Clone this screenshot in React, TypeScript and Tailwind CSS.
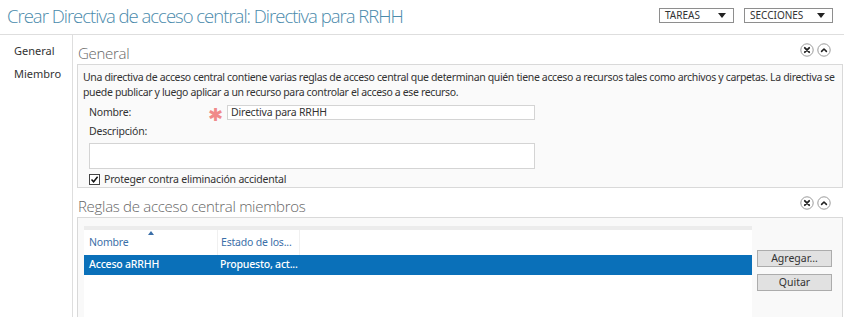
import React from 'react';

const CircleIcon = ({ kind }: { kind: 'x' | 'up' }) => (
  <svg width="14" height="14" viewBox="0 0 14 14" className="block">
    <circle cx="7" cy="7" r="6.2" fill="#fff" stroke="#9a9a9a" strokeWidth="1" />
    {kind === 'x' ? (
      <path d="M4.8 4.8 L9.2 9.2 M9.2 4.8 L4.8 9.2" stroke="#222" strokeWidth="1.8" strokeLinecap="round" />
    ) : (
      <path d="M4.6 8.4 L7 6 L9.4 8.4" stroke="#222" strokeWidth="1.6" fill="none" strokeLinecap="round" strokeLinejoin="round" />
    )}
  </svg>
);

const Dropdown = ({ label, width }: { label: string; width: string }) => (
  <div className={`${width} h-[15px] border border-[#8e8e8e] bg-white flex items-center justify-between pl-[5px] pr-[7px]`}>
    <span className="text-[10px] leading-none text-[#333]">{label}</span>
    <svg width="8" height="5" viewBox="0 0 8 5">
      <path d="M0 0 H8 L4 5 Z" fill="#222" />
    </svg>
  </div>
);

const SectionHead = ({ title }: { title: string }) => (
  <div className="flex items-center justify-between h-[29px] pt-[7px] pr-[12px]">
    <span className="text-[15px] font-light text-[#666] pl-[1px] tracking-[-0.3px]" style={{ fontFamily: '"Open Sans", "Noto Sans", sans-serif' }}>{title}</span>
    <div className="flex gap-[3px] -mt-[6px]">
      <CircleIcon kind="x" />
      <CircleIcon kind="up" />
    </div>
  </div>
);

export default function App() {
  return (
    <div className="w-[844px] h-[317px] overflow-hidden bg-white text-[#333]" style={{ fontFamily: '"Noto Sans", "Open Sans", sans-serif' }}>
      {/* header */}
      <div className="h-[35px] flex items-center justify-between border-b border-[#dedede] pl-[7px] pr-[11px]">
        <h1 className="text-[18.5px] font-light text-[#4a8aab] tracking-[-1px] -mt-[3px]" style={{ fontFamily: '"Open Sans", "Noto Sans", sans-serif' }}>
          Crear Directiva de acceso central: Directiva para RRHH
        </h1>
        <div className="flex gap-[10px] -mt-[4px]">
          <Dropdown label="TAREAS" width="w-[75px]" />
          <Dropdown label="SECCIONES" width="w-[89px]" />
        </div>
      </div>

      <div className="flex h-[282px]">
        {/* nav */}
        <div className="w-[73px] border-r border-[#dedede] pl-[14px] pt-[8px] flex flex-col gap-[6px] text-[11px] text-[#333]">
          <span>General</span>
          <span>Miembro</span>
        </div>

        {/* main */}
        <div className="flex-1 pl-[4px] pr-[1px]">
          <SectionHead title="General" />
          <div className="border border-[#d9d9d9] bg-[#fafafa] h-[124px] pl-[5px] pt-[5px] text-[10.5px]">
            <p className="leading-[15px] pr-[2px] tracking-[-0.35px]">
              Una directiva de acceso central contiene varias reglas de acceso central que determinan quién tiene acceso a recursos tales como archivos y carpetas. La directiva se puede publicar y luego aplicar a un recurso para controlar el acceso a ese recurso.
            </p>
            <div className="flex items-center mt-[5px] pl-[6px] h-[15px] tracking-[-0.2px]">
              <span className="w-[119px]">Nombre:</span>
              <span className="text-[#f08a8a] text-[18px] leading-none w-[19px] mt-[3px]">✱</span>
              <div className="w-[308px] h-[15px] border border-[#d4d4d4] bg-white pl-[3px] leading-[13px]">Directiva para RRHH</div>
            </div>
            <div className="pl-[6px] mt-[4px] leading-[15px] tracking-[-0.2px]">Descripción:</div>
            <div className="ml-[6px] mt-[4px] w-[446px] h-[26px] border border-[#d4d4d4] bg-white" />
            <div className="flex items-center gap-[4px] pl-[6px] mt-[3px] tracking-[-0.2px]">
              <div className="w-[11px] h-[11px] border border-[#444] bg-white flex items-center justify-center">
                <svg width="9" height="9" viewBox="0 0 9 9">
                  <path d="M1.5 4.5 L3.6 6.8 L7.6 1.8" stroke="#111" strokeWidth="1.5" fill="none" />
                </svg>
              </div>
              <span>Proteger contra eliminación accidental</span>
            </div>
          </div>

          <SectionHead title="Reglas de acceso central miembros" />
          <div className="border border-[#d9d9d9] bg-[#f9f9f9] h-[120px] flex pl-[6px] pt-[8px]">
            <div className="w-[668px] bg-white border-t-[4px] border-[#ececec] text-[10.5px] tracking-[-0.2px]">
              <div className="flex h-[25px] items-center relative text-[#3b6fa8]">
                <div className="w-[133px] pl-[5px] relative h-full flex items-center">
                  Nombre
                  <svg width="6" height="4" viewBox="0 0 6 4" className="absolute left-[64px] top-[1px]">
                    <path d="M0 4 L3 0 L6 4 Z" fill="#3b6fa8" />
                  </svg>
                </div>
                <div className="w-[83px] h-full flex items-center pl-[3px] border-l border-[#f0f0f0] border-r">Estado de los...</div>
              </div>
              <div className="h-[20px] bg-[#0a70b9] text-white font-medium flex items-center">
                <span className="w-[133px] pl-[5px]">Acceso aRRHH</span>
                <span className="pl-[3px]">Propuesto, act...</span>
              </div>
            </div>
            <div className="flex flex-col gap-[7px] pl-[5px] pt-[24px]">
              <button className="w-[75px] h-[17px] border border-[#acacac] bg-[#e1e1e1] text-[10.5px] leading-none">Agregar...</button>
              <button className="w-[75px] h-[17px] border border-[#acacac] bg-[#e1e1e1] text-[10.5px] leading-none">Quitar</button>
            </div>
          </div>
        </div>
      </div>
    </div>
  );
}
